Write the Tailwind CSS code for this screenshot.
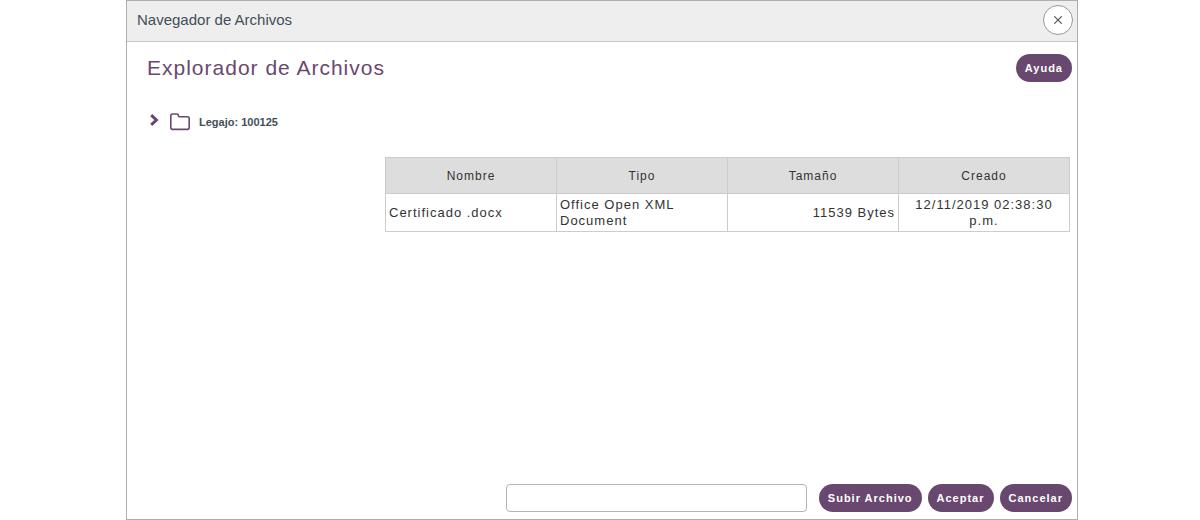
<!DOCTYPE html>
<html lang="es">
<head>
<meta charset="utf-8">
<meta name="viewport" content="width=device-width, initial-scale=1">
<title>Navegador de Archivos</title>
<script src="https://cdn.jsdelivr.net/npm/@tailwindcss/browser@4"></script>
</head>
<body class="flex min-h-screen bg-white pl-[126px] pr-[122px] font-['Liberation_Sans',Arial,sans-serif] text-[#333333]">
<section role="dialog" aria-labelledby="dialog-title" class="flex min-w-0 grow flex-col border border-[#aeaeb2]">
  <header class="flex h-[41px] shrink-0 items-center justify-between border-b border-[#c6c6ca] bg-[#eeeeee] pb-[2px] pl-[10px] pr-1">
    <h2 id="dialog-title" class="text-[15px] leading-5 text-[#414f59]">Navegador de Archivos</h2>
    <button type="button" aria-label="Cerrar" class="flex size-[30px] items-center justify-center rounded-full border border-[#999999] bg-white">
      <svg class="size-2" viewBox="0 0 8 8" fill="none" stroke="#555555" stroke-width="1.2"><path d="M.3.3l7.4 7.4M7.7.3L.3 7.7"/></svg>
    </button>
  </header>
  <main class="flex grow flex-col pb-[7px] pl-5 pr-[5px] pt-3">
    <div class="flex items-center justify-between">
      <h1 class="text-[21px] leading-7 tracking-[1px] text-[#69486f]">Explorador de Archivos</h1>
      <button type="button" class="h-7 rounded-full bg-[#69486f] px-[9px] text-[11px] font-bold tracking-[1px] text-white">Ayuda</button>
    </div>
    <div class="mt-[30px] flex h-5 items-center text-[11px] font-bold text-[#414f59]">
      <button type="button" aria-label="Expandir" class="mb-1 ml-[3px] flex h-3 w-[9px] items-center">
        <svg class="h-3 w-[9px]" viewBox="0 0 9 12" fill="none" stroke="#69486f" stroke-width="3"><path d="M1.2 1.2L6.4 6l-5.2 4.8"/></svg>
      </button>
      <svg class="ml-[11px] h-[18px] w-5" viewBox="0 0 20 18" fill="none" stroke="#69486f" stroke-width="1.6" stroke-linejoin="round"><path d="M.8 14.6V2.8Q.8 1 2.6 1h4.2Q8.4 1 8.4 2.6v.2q0 .9.9.9h8.1q1.8 0 1.8 1.8v9.1q0 1.8-1.8 1.8H2.6q-1.8 0-1.8-1.8z"/></svg>
      <span class="ml-[9px]">Legajo: 100125</span>
    </div>
    <div class="mt-[25px] pl-[238px] pr-[2px]">
      <table class="w-full table-fixed border-collapse text-[13px] leading-4 tracking-[1px]">
        <thead>
          <tr class="h-9 bg-[#dddddd] text-[12px]">
            <th scope="col" class="border border-[#cccccc] font-normal">Nombre</th>
            <th scope="col" class="border border-[#cccccc] font-normal">Tipo</th>
            <th scope="col" class="border border-[#cccccc] font-normal">Tamaño</th>
            <th scope="col" class="border border-[#cccccc] font-normal">Creado</th>
          </tr>
        </thead>
        <tbody>
          <tr class="h-[38px]">
            <td class="border border-[#cccccc] px-[3px]">Certificado .docx</td>
            <td class="border border-[#cccccc] px-[3px]">Office Open XML Document</td>
            <td class="border border-[#cccccc] px-[3px] text-right">11539 Bytes</td>
            <td class="border border-[#cccccc] px-[3px] text-center">12/11/2019 02:38:30 p.m.</td>
          </tr>
        </tbody>
      </table>
    </div>
    <div class="mt-auto flex items-center justify-end gap-[6px]">
      <input type="text" aria-label="Archivo" class="mr-[6px] h-7 w-[301px] rounded-[4px] border border-[#b3b3b3] bg-white px-2 text-[13px]">
      <button type="button" class="h-7 rounded-full bg-[#69486f] px-[9px] text-[11px] font-bold tracking-[1px] text-white">Subir Archivo</button>
      <button type="button" class="h-7 rounded-full bg-[#69486f] px-[9px] text-[11px] font-bold tracking-[1px] text-white">Aceptar</button>
      <button type="button" class="h-7 rounded-full bg-[#69486f] px-[9px] text-[11px] font-bold tracking-[1px] text-white">Cancelar</button>
    </div>
  </main>
</section>
</body>
</html>
